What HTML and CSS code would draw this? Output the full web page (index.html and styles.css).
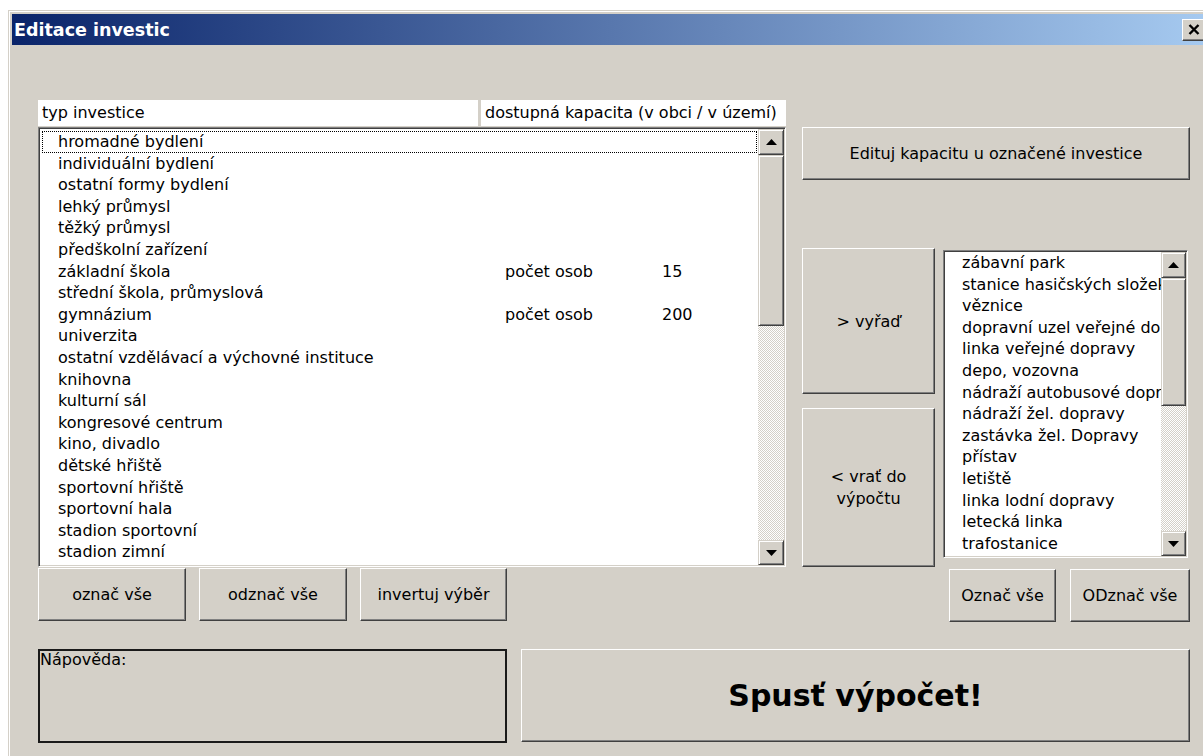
FILE: index.html
```html
<!DOCTYPE html>
<html lang="cs">
<head>
<meta charset="utf-8">
<title>Editace investic</title>
<link rel="stylesheet" href="styles.css">
</head>
<body>
<div class="window">
  <div class="titlebar">
    <span class="title">Editace investic</span>
    <div class="close-btn">
      <svg width="12" height="11" viewBox="0 0 12 11"><path d="M1.5 1 L10.5 10 M10.5 1 L1.5 10" stroke="#000" stroke-width="2.4" fill="none"/></svg>
    </div>
  </div>

  <div class="client">
    <div class="top">
      <div class="left-col">
        <div class="headers">
          <div class="hdr hdr-type">typ investice</div>
          <div class="hdr hdr-cap">dostupná kapacita (v obci / v území)</div>
        </div>

        <div class="listbox main-list">
          <div class="items">
            <div class="item focused"><span>hromadné bydlení</span></div>
            <div class="item"><span>individuální bydlení</span></div>
            <div class="item"><span>ostatní formy bydlení</span></div>
            <div class="item"><span>lehký průmysl</span></div>
            <div class="item"><span>těžký průmysl</span></div>
            <div class="item"><span>předškolní zařízení</span></div>
            <div class="item"><span>základní škola</span><span>počet osob</span><span>15</span></div>
            <div class="item"><span>střední škola, průmyslová</span></div>
            <div class="item"><span>gymnázium</span><span>počet osob</span><span>200</span></div>
            <div class="item"><span>univerzita</span></div>
            <div class="item"><span>ostatní vzdělávací a výchovné instituce</span></div>
            <div class="item"><span>knihovna</span></div>
            <div class="item"><span>kulturní sál</span></div>
            <div class="item"><span>kongresové centrum</span></div>
            <div class="item"><span>kino, divadlo</span></div>
            <div class="item"><span>dětské hřiště</span></div>
            <div class="item"><span>sportovní hřiště</span></div>
            <div class="item"><span>sportovní hala</span></div>
            <div class="item"><span>stadion sportovní</span></div>
            <div class="item"><span>stadion zimní</span></div>
          </div>
          <div class="scrollbar">
            <div class="sb-btn sb-up"><svg width="11" height="6" viewBox="0 0 11 6"><polygon points="5.5,0 11,6 0,6" fill="#000"/></svg></div>
            <div class="sb-thumb main-thumb"></div>
            <div class="sb-track"></div>
            <div class="sb-btn sb-down"><svg width="11" height="6" viewBox="0 0 11 6"><polygon points="0,0 11,0 5.5,6" fill="#000"/></svg></div>
          </div>
        </div>

        <div class="btn-row">
          <button class="btn btn-sel">označ vše</button>
          <button class="btn btn-sel">odznač vše</button>
          <button class="btn btn-sel btn-inv">invertuj výběr</button>
        </div>
      </div>

      <div class="right-col">
        <button class="btn btn-edit">Edituj kapacitu u označené investice</button>
        <div class="transfer">
          <div class="move-btns">
            <button class="btn btn-remove">&gt; vyřaď</button>
            <button class="btn btn-return">&lt; vrať do<br>výpočtu</button>
          </div>
          <div class="side">
            <div class="listbox excl-list">
              <div class="items">
                <div class="item"><span>zábavní park</span></div>
                <div class="item"><span>stanice hasičských složek</span></div>
                <div class="item"><span>věznice</span></div>
                <div class="item"><span>dopravní uzel veřejné dopravy</span></div>
                <div class="item"><span>linka veřejné dopravy</span></div>
                <div class="item"><span>depo, vozovna</span></div>
                <div class="item"><span>nádraží autobusové dopravy</span></div>
                <div class="item"><span>nádraží žel. dopravy</span></div>
                <div class="item"><span>zastávka žel. Dopravy</span></div>
                <div class="item"><span>přístav</span></div>
                <div class="item"><span>letiště</span></div>
                <div class="item"><span>linka lodní dopravy</span></div>
                <div class="item"><span>letecká linka</span></div>
                <div class="item"><span>trafostanice</span></div>
              </div>
              <div class="scrollbar">
                <div class="sb-btn sb-up"><svg width="11" height="6" viewBox="0 0 11 6"><polygon points="5.5,0 11,6 0,6" fill="#000"/></svg></div>
                <div class="sb-thumb side-thumb"></div>
                <div class="sb-track"></div>
                <div class="sb-btn sb-down"><svg width="11" height="6" viewBox="0 0 11 6"><polygon points="0,0 11,0 5.5,6" fill="#000"/></svg></div>
              </div>
            </div>
            <div class="side-btns">
              <button class="btn btn-mark">Označ vše</button>
              <button class="btn btn-unmark">ODznač vše</button>
            </div>
          </div>
        </div>
      </div>
    </div>

    <div class="bottom">
      <div class="help">Nápověda:</div>
      <button class="btn btn-run">Spusť výpočet!</button>
    </div>
  </div>
</div>
</body>
</html>
```

FILE: styles.css
```css
* {
  box-sizing: border-box;
}

body {
  margin: 0;
  background: #fff;
  overflow: hidden;
  font-family: "DejaVu Sans", "Noto Sans", sans-serif;
  font-size: 16px;
  color: #000;
}

/* dialog frame */
.window {
  margin: 10px 0 0 8px;
  width: 1204px;
  height: 760px;
  background: #d4d0c8;
  border: 1px solid #d4d0c8;
  box-shadow: inset 1px 1px #fff;
  padding: 3px;
}

.titlebar {
  height: 31px;
  display: flex;
  align-items: center;
  padding-left: 2px;
  background: linear-gradient(to right, #0a246a, #a6caf0);
  color: #fff;
  font-weight: bold;
  font-size: 17.5px;
}

.close-btn {
  margin-left: auto;
  margin-right: 2px;
  width: 24px;
  height: 22px;
  display: flex;
  align-items: center;
  justify-content: center;
  background: #d4d0c8;
  border: 1px solid;
  border-color: #fff #404040 #404040 #fff;
  box-shadow: inset -1px -1px #808080;
}

.client {
  padding: 55px 0 0 26px;
}

.top {
  display: flex;
  gap: 16px;
}

/* left: investment list */
.left-col {
  width: 748px;
  display: flex;
  flex-direction: column;
}

.headers {
  display: flex;
  gap: 3px;
  height: 26px;
}

.hdr {
  background: #fff;
  line-height: 26px;
  padding-left: 4px;
  white-space: nowrap;
  overflow: hidden;
}

.hdr-type {
  width: 440px;
}

.hdr-cap {
  width: 305px;
}

.listbox {
  display: flex;
  background: #fff;
  border: 1px solid;
  border-color: #808080 #fff #fff #808080;
  box-shadow: inset 1px 1px #404040, inset -1px -1px #d4d0c8;
  padding: 1px;
}

.items {
  flex: 1;
  overflow: hidden;
  min-width: 0;
}

.item {
  height: 21.6px;
  line-height: 21.6px;
  white-space: nowrap;
}

.main-list {
  margin-top: 1px;
  height: 440px;
}

.main-list .items {
  padding-top: 2px;
}

.main-list .item {
  display: grid;
  grid-template-columns: 447px 157px auto;
  padding-left: 18px;
}

.main-list .item.focused {
  outline: 1px dotted #000;
  outline-offset: -1px;
  margin: 0 1px 0 2px;
  padding-left: 16px;
}

.excl-list {
  margin-top: 2px;
  width: 245px;
  height: 308px;
}

.excl-list .item {
  padding-left: 17px;
  overflow: hidden;
}

/* scrollbars */
.scrollbar {
  width: 26px;
  flex-shrink: 0;
  display: flex;
  flex-direction: column;
}

.excl-list .scrollbar {
  width: 25px;
}

.sb-btn,
.sb-thumb {
  background: #d4d0c8;
  border: 1px solid;
  border-color: #d4d0c8 #404040 #404040 #d4d0c8;
  box-shadow: inset 1px 1px #fff, inset -1px -1px #808080;
}

.sb-btn {
  height: 26px;
  display: flex;
  align-items: center;
  justify-content: center;
}

.sb-down {
  height: 25px;
}

.main-thumb {
  height: 171px;
}

.side-thumb {
  height: 128px;
}

.sb-track {
  flex: 1;
  background-image: repeating-conic-gradient(#fff 0 25%, #d4d0c8 0 50%);
  background-size: 2px 2px;
}

/* push buttons */
.btn {
  font: inherit;
  color: #000;
  background: #d4d0c8;
  border: 1px solid;
  border-color: #fff #404040 #404040 #fff;
  box-shadow: inset -1px -1px #808080;
  padding: 0;
  text-align: center;
  white-space: nowrap;
}

.btn-row {
  display: flex;
  gap: 13px;
  margin-top: 1px;
}

.btn-sel {
  width: 148px;
  height: 53px;
}

.btn-inv {
  width: 147px;
}

/* right: capacity and excluded list */
.right-col {
  width: 388px;
  display: flex;
  flex-direction: column;
}

.btn-edit {
  margin-top: 27px;
  height: 53px;
  width: 100%;
}

.transfer {
  display: flex;
  margin-top: 68px;
}

.move-btns {
  width: 133px;
  display: flex;
  flex-direction: column;
}

.btn-remove {
  height: 146px;
}

.btn-return {
  margin-top: 14px;
  height: 159px;
  line-height: 22px;
}

.side {
  margin-left: 8px;
  width: 247px;
}

.side-btns {
  display: flex;
  gap: 14px;
  margin-top: 11px;
  padding-left: 6px;
}

.btn-mark {
  width: 107px;
  height: 53px;
}

.btn-unmark {
  width: 120px;
  height: 53px;
}

/* bottom: help box and run button */
.bottom {
  display: flex;
  gap: 14px;
  margin-top: 27px;
}

.help {
  width: 469px;
  height: 94px;
  border: 2px solid #1a1a1a;
  line-height: 18px;
}

.btn-run {
  width: 669px;
  height: 93px;
  font-weight: bold;
  font-size: 30px;
}
```
